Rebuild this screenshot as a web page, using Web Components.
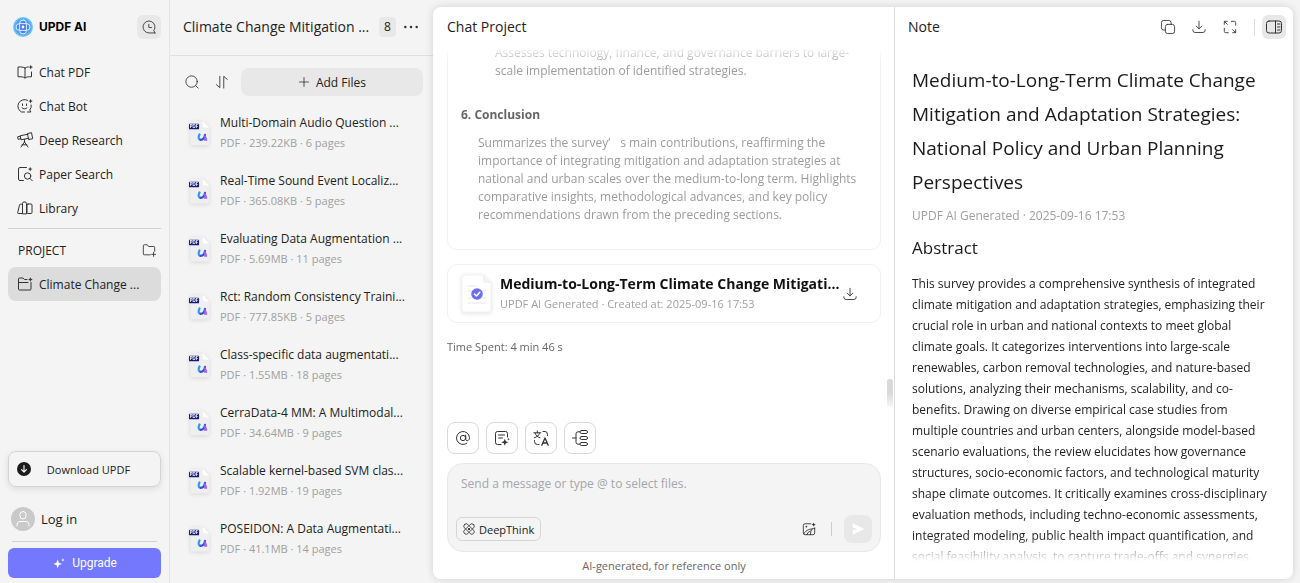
<!DOCTYPE html>
<html lang="en">
<head>
<meta charset="utf-8">
<title>UPDF AI</title>
<style>
  * { box-sizing: border-box; }
  body {
    margin: 0;
    height: 100vh;
    overflow: hidden;
    background: #f4f4f4;
    color: #222;
    font-family: "Open Sans", "Noto Sans", "Noto Sans CJK SC", sans-serif;
    font-size: 12px;
  }
</style>
</head>
<body>
<updf-app></updf-app>

<script>
// Shared reset, every shadow root needs its own copy
const base = `
  * { box-sizing: border-box; }
  h1, h2, h3, p, ul { margin: 0; padding: 0; font-weight: 400; }
  button { font: inherit; color: inherit; margin: 0; padding: 0; border: 0; background: none; cursor: pointer; }
  a { color: inherit; text-decoration: none; }
`;

const icons = {
  logo: `<defs><radialGradient id="g"><stop offset="0" stop-color="#3f6ff5"/><stop offset=".6" stop-color="#4a8cf8"/><stop offset="1" stop-color="#6fd0fb"/></radialGradient></defs>
    <circle cx="10" cy="10" r="10" fill="url(#g)" stroke="none"/>
    <g stroke="#dff0ff" stroke-width="1"><rect x="3" y="6.6" width="14" height="6.8" rx="3.4"/><rect x="6.6" y="3" width="6.8" height="14" rx="3.4"/></g>
    <circle cx="10" cy="10" r="1.4" fill="#fff" stroke="none"/>`,
  history: `<path d="M14.800 14.800H8A6.800 6.800 0 1 1 13.500 12l1.300 2.800z"/><path d="M7.800 5v3.600h3"/>`,
  book: `<path d="M8 4C6.5 3 4 2.8 1 3v9.8c3-.2 5.500 0 7 1.200 1.500-1.200 3.800-1.400 6.500-1.200V8M8 4v10M8 4c.9-.7 2-1 3.300-1"/><path class="f" d="M13.800.8l.7 1.600 1.600.7-1.600.7-.7 1.600-.7-1.600-1.600-.7 1.600-.7z"/>`,
  bot: `<path d="M10.500 2.300A6 6 0 1 0 4.500 14h3M14.200 7a6 6 0 0 1-1.500 5l1.200 2h-3.500"/><path d="M5.500 6v1.500M9.500 6v1.500M5 9.800c1.400 1.500 3.700 1.500 5 0"/><path class="f" d="M13.600.8l.7 1.600 1.600.7-1.600.7-.7 1.600-.7-1.600-1.600-.7 1.600-.7z"/>`,
  telescope: `<path d="M10.800 1.500l3.700-.8 1.200 6-3.700.8zM10.900 2.200L3.200 3.800l.8 4 7.800-1.500M3.300 4.200L.6 4.800l.5 2.500 2.700-.5M7.500 10L4 15M7.500 10l3.500 5M7.500 7.500V10M5 12.800h4.800"/>`,
  paper: `<path d="M9.500 1.500H3A1.500 1.500 0 0 0 1.500 3v10A1.500 1.500 0 0 0 3 14.500h3.500"/><circle cx="10.600" cy="10" r="3.200"/><path d="M13 12.500l2.300 2.300"/><path class="f" d="M13.200.8l.7 1.600 1.600.7-1.600.7-.7 1.600-.7-1.600-1.600-.7 1.600-.7z"/>`,
  library: `<path d="M5 13.500H1.200q-.7 0-.5-.8L2.500 5q.2-.8 1-.8H5M5.500 13.500v-10q0-1.500 1.500-1.500h1q1.500 0 1.500 1.500v10zM11 4h3q1 0 1 1v7.500q0 1-1 1h-3q-1 0-1-1V5q0-1 1-1z"/>`,
  folderPlus: `<path d="M9.500 13.500H2.500a1 1 0 0 1-1-1V3a1 1 0 0 1 1-1H6l1.500 2h6a1 1 0 0 1 1 1v4.500M11 13h4.500M13.200 10.700v4.600"/>`,
  folder: `<path d="M10 3.500H7.500L6 2H2.500a1 1 0 0 0-1 1v10a1 1 0 0 0 1 1h10.500a1 1 0 0 0 1-1V6.500M1.500 6.500H11"/><path class="f" d="M13.400 1.200l.7 1.600 1.600.7-1.600.7-.7 1.600-.7-1.600-1.600-.7 1.600-.7z"/>`,
  downDot: `<circle cx="8" cy="8" r="8" fill="#1c1c1c" stroke="none"/><path stroke="#fff" stroke-width="1.300" d="M8 4.200v7.200M5.200 8.700L8 11.500l2.800-2.800"/>`,
  user: `<circle cx="12" cy="12" r="12" fill="#c9c9c9" stroke="none"/><g stroke="#fff"><rect x="9" y="4.500" width="6" height="7.500" rx="3"/><path d="M6 19v-1.500q0-3 3-3h6q3 0 3 3V19"/></g>`,
  sparkle: `<path fill="#fff" stroke="none" d="M6.500 4l1.400 3.600L11.500 9l-3.600 1.400L6.500 14l-1.400-3.600L1.500 9l3.600-1.400zM12.500 2.500l.6 1.400 1.400.6-1.400.6-.6 1.400-.6-1.400-1.400-.6 1.400-.6z"/>`,
  dots: `<g class="f"><circle cx="1.500" cy="8" r="1.400"/><circle cx="8" cy="8" r="1.400"/><circle cx="14.500" cy="8" r="1.400"/></g>`,
  search: `<circle cx="7.500" cy="7.500" r="6.500"/><path d="M12.300 12.300l2.700 2.700"/>`,
  sort: `<path d="M5.500 1.500V14.500L1.500 11M10 15V1.500l4 3.500"/>`,
  plus: `<path d="M8 2v12M2 8h12"/>`,
  pdf: `<path fill="#efeff1" stroke="none" d="M3.500 1H15l7 7v17.500q0 2-2 2H3.500q-2 0-2-2V3q0-2 2-2z"/>
    <path fill="#fff" stroke="none" d="M15 1l7 7h-5q-2 0-2-2z"/>
    <rect x="0" y="4" width="11" height="6" rx="1" fill="#141c78" stroke="none"/>
    <text x="5.500" y="8.800" text-anchor="middle" font-family="Inter, sans-serif" font-size="4.800" font-weight="700" fill="#fff" stroke="none">PDF</text>
    <path stroke="#2d9be8" stroke-width="2.400" d="M11.500 15.500c-1.600 3-1.300 6 1.200 6"/><path stroke="#3f4bdf" stroke-width="2.400" d="M12.700 21.500c2.800 0 4.300-2.600 4.800-5.400"/><path fill="#9a6ae8" stroke="none" d="M16.800 16.200q2.800 1.200 3.200 6.300h-3.600z"/>`,
  doc: `<path fill="#fff" stroke="#f3f3f3" d="M4 1h18l8 8v26q0 3-3 3H4q-3 0-3-3V4q0-3 3-3z"/><path fill="#f2f2f2" stroke="none" d="M22 1l8 8h-6q-2 0-2-2z"/>
    <path stroke="#e6e7ef" stroke-width="1.200" d="M7 12h8M7 17h18M7 24h18M7 29h18"/><circle cx="16" cy="20" r="5.800" fill="#6c70f0" stroke="none"/><path stroke="#fff" stroke-width="1.500" d="M13.500 20l2 2 3.300-3.700"/>`,
  download: `<path d="M8 1.500V10M4.800 7L8 10.200 11.200 7M1 11v.8q0 2.500 2.500 2.500h9q2.500 0 2.500-2.500V11"/>`,
  copy: `<rect x="5" y="5" width="10.500" height="10.500" rx="2.500"/><path d="M11.500 5V3q0-2.500-2.500-2.500H3Q.5.500.5 3v6q0 2.500 2.500 2.500h2"/>`,
  expand: `<path d="M1.500 5V1.500H5M1.500 1.500L5 5M9.500 1.500H13q1.500 0 1.500 1.500v3M14.500 11v3.500H11M14.500 14.500L11 11M1.500 9.500V13q0 1.500 1.500 1.500h3"/>`,
  panel: `<rect x=".5" y="2" width="15" height="12" rx="2.500"/><path d="M9.500 2v12M11.500 5H14M11.500 8H14M11.500 11H14"/>`,
  at: `<circle cx="8" cy="8" r="2.700"/><path d="M10.700 5.200V9.200c0 2.300 3.800 2 3.800-1.400A6.500 6.500 0 1 0 11.800 13.300"/>`,
  summary: `<path d="M7 14.500H3.500q-2 0-2-2v-9q0-2 2-2h8q2 0 2 2V7M4.500 5h6M4.500 8h4"/><path class="f" d="M10.800 8.800l1 2.500 2.500 1-2.500 1-1 2.500-1-2.500-2.500-1 2.500-1zM14.500 7.800l.4 1 1 .4-1 .4-.4 1-.4-1-1-.4 1-.4z"/>`,
  translate: `<path d="M.8 2.800h7M4.300.8v2M2 3c.7 2.400 2.400 4 5 4.800M6.600 3c-.7 2.400-2.400 4-5.400 4.800M10 1.500H12q2.500 0 2.500 3v1M1.500 10.500v1q0 3 3 3H6"/><path stroke-width="1.300" d="M8.800 15.200L12 8l3.200 7.200M9.900 13h4.200"/>`,
  mindmap: `<path d="M.5 8H4M7.500 1.800H6q-2 0-2 2v8.400q0 2 2 2h1.500"/><rect x="8" y=".5" width="7.500" height="3" rx="1.500"/><rect x="8" y="6.500" width="7.500" height="3" rx="1.500"/><rect x="8" y="12.500" width="7.500" height="3" rx="1.500"/>`,
  atom: `<rect x="-3.200" y="-8.500" width="6.400" height="17" rx="3.200" transform="translate(8 8) rotate(45)"/><rect x="-3.200" y="-8.500" width="6.400" height="17" rx="3.200" transform="translate(8 8) rotate(-45)"/><circle class="f" cx="8" cy="8" r="1.500"/>`,
  image: `<path d="M10 2H3.500q-2 0-2 2v8.500q0 2 2 2h9q2 0 2-2V6.500M2 13.500c3-5 7-5.500 12.500-6M5.500 14.500q.5-3 4-4.200M9.500 14.500q0-4 2-6.500"/><circle class="f" cx="5" cy="5.200" r="1"/><path class="f" d="M13.300.5l.8 1.700 1.700.8-1.700.8-.8 1.700-.8-1.700-1.700-.8 1.700-.8z"/>`,
  send: `<path fill="#fff" stroke="none" d="M2 1.500l13 6.500-13 6.500V9.500L8 8 2 6.500z"/>`
};

class UiIcon extends HTMLElement {
  constructor() {
    super();
    this.attachShadow({ mode: "open" });
  }

  connectedCallback() {
    const box = this.getAttribute("box") || "16 16";
    this.shadowRoot.innerHTML = `
      <style>
        :host { display: block; flex: none; width: 16px; height: 16px; }
        svg { display: block; width: 100%; height: 100%; overflow: visible; fill: none; stroke: currentColor;
              stroke-width: 1; stroke-linecap: round; stroke-linejoin: round; }
        .f { fill: currentColor; stroke: none; }
      </style>
      <svg viewBox="0 0 ${box}" aria-hidden="true">${icons[this.getAttribute("name")]}</svg>
    `;
  }
}
customElements.define("ui-icon", UiIcon);

class IconButton extends HTMLElement {
  constructor() {
    super();
    this.attachShadow({ mode: "open" });
  }

  connectedCallback() {
    this.shadowRoot.innerHTML = `
      <style>
        ${base}
        :host { display: block; flex: none; }
        button { display: grid; place-items: center; width: 24px; height: 24px; border-radius: 6px; color: #333; }
        :host([filled]) button { background: #e8e8e8; }
        :host([outlined]) button { width: 32px; height: 32px; border: 1px solid #d9d9d9; border-radius: 8px; background: #fff; }
        :host([send]) button { width: 28px; height: 28px; border-radius: 8px; background: #e8e8e8; }
        ui-icon { width: 14px; height: 14px; }
        :host([outlined]) ui-icon, :host([large]) ui-icon { width: 16px; height: 16px; }
      </style>
      <button type="button" aria-label="${this.getAttribute("label")}"><ui-icon name="${this.getAttribute("icon")}"></ui-icon></button>
    `;
  }
}
customElements.define("icon-button", IconButton);

class NavItem extends HTMLElement {
  constructor() {
    super();
    this.attachShadow({ mode: "open" });
  }

  connectedCallback() {
    this.shadowRoot.innerHTML = `
      <style>
        ${base}
        :host { display: block; }
        a { display: flex; align-items: center; gap: 6px; height: 34px; padding: 0 9px; border-radius: 8px; font-size: 12px; white-space: nowrap; }
        :host([active]) a { background: #dcdcdc; }
        ui-icon { color: #333; }
      </style>
      <a href="#"><ui-icon name="${this.getAttribute("icon")}"></ui-icon><slot></slot></a>
    `;
  }
}
customElements.define("nav-item", NavItem);

class AppSidebar extends HTMLElement {
  constructor() {
    super();
    this.attachShadow({ mode: "open" });
    this.shadowRoot.innerHTML = `
      <style>
        ${base}
        :host { display: flex; flex-direction: column; padding: 15px 8px 5px; border-right: 1px solid #e4e4e4; }
        .brand { display: flex; align-items: center; gap: 6px; padding-left: 5px; margin-bottom: 16px; }
        .brand ui-icon { width: 20px; height: 20px; }
        .brand b { flex: 1; font: 700 12px/24px Inter, sans-serif; color: #000; }
        hr { width: 100%; margin: 0; border: 0; border-top: 1px solid #d2d2d2; }
        nav hr { margin: 3px 0 4px; }
        .project { display: flex; align-items: center; justify-content: space-between; height: 34px; padding: 0 0 0 10px; }
        .project h2 { font-size: 12px; }
        .spacer { flex: 1; }
        .download { display: flex; align-items: center; height: 36px; padding: 0 14px 0 8px; border: 1px solid #d4d4d8; border-radius: 8px;
                    font-size: 11px; box-shadow: 0 2px 6px rgba(0, 0, 0, .1); }
        .download ui-icon { width: 14px; height: 14px; }
        .download span { flex: 1; text-align: center; }
        .login { display: flex; align-items: center; gap: 6px; height: 24px; margin: 20px 3px 10px; font-size: 13px; }
        .login ui-icon { width: 24px; height: 24px; }
        .line { margin: 0 4px 6px; width: auto; }
        .upgrade { display: flex; align-items: center; justify-content: center; gap: 6px; height: 30px; border-radius: 6px;
                   background: #7378fd; color: #fff; font: 12px Roboto, sans-serif; }
        .upgrade ui-icon { width: 14px; height: 14px; }
      </style>
      <div class="brand">
        <ui-icon name="logo" box="20 20"></ui-icon><b>UPDF AI</b>
        <icon-button icon="history" label="History" filled></icon-button>
      </div>
      <nav>
        <nav-item icon="book">Chat PDF</nav-item>
        <nav-item icon="bot">Chat Bot</nav-item>
        <nav-item icon="telescope">Deep Research</nav-item>
        <nav-item icon="paper">Paper Search</nav-item>
        <nav-item icon="library">Library</nav-item>
        <hr>
        <div class="project"><h2>PROJECT</h2><icon-button icon="folderPlus" label="New project"></icon-button></div>
        <nav-item icon="folder" active>Climate Change ...</nav-item>
      </nav>
      <div class="spacer"></div>
      <button class="download" type="button"><ui-icon name="downDot"></ui-icon><span>Download UPDF</span></button>
      <a class="login" href="#"><ui-icon name="user" box="24 24"></ui-icon>Log in</a>
      <hr class="line">
      <button class="upgrade" type="button"><ui-icon name="sparkle"></ui-icon>Upgrade</button>
    `;
  }
}
customElements.define("app-sidebar", AppSidebar);

class FileItem extends HTMLElement {
  constructor() {
    super();
    this.attachShadow({ mode: "open" });
  }

  connectedCallback() {
    this.shadowRoot.innerHTML = `
      <style>
        ${base}
        :host { display: flex; gap: 9px; height: 58px; white-space: nowrap; }
        ui-icon { width: 22px; height: 26px; margin-top: 7px; filter: drop-shadow(0 1px 2px rgba(0, 0, 0, .12)); }
        h3 { font-size: 12px; line-height: 20px; }
        p { font-size: 11px; line-height: 20px; color: #a0a0a0; }
      </style>
      <ui-icon name="pdf" box="24 28"></ui-icon>
      <div><h3><slot></slot></h3><p>PDF · ${this.getAttribute("meta")}</p></div>
    `;
  }
}
customElements.define("file-item", FileItem);

const files = [
  ["Multi-Domain Audio Question ...", "239.22KB · 6 pages"],
  ["Real-Time Sound Event Localiz...", "365.08KB · 5 pages"],
  ["Evaluating Data Augmentation ...", "5.69MB · 11 pages"],
  ["Rct: Random Consistency Traini...", "777.85KB · 5 pages"],
  ["Class-specific data augmentati...", "1.55MB · 18 pages"],
  ["CerraData-4 MM: A Multimodal...", "34.64MB · 9 pages"],
  ["Scalable kernel-based SVM clas...", "1.92MB · 19 pages"],
  ["POSEIDON: A Data Augmentati...", "41.1MB · 14 pages"]
];

class FilePanel extends HTMLElement {
  constructor() {
    super();
    this.attachShadow({ mode: "open" });
    this.shadowRoot.innerHTML = `
      <style>
        ${base}
        :host { display: block; min-width: 0; overflow: hidden; }
        header { display: flex; align-items: center; height: 56px; padding: 0 10px 2px 13px; border-bottom: 1px solid #e0e0e0; }
        h1 { flex: 1; font-size: 14px; white-space: nowrap; }
        .count { width: 17px; margin-right: 3px; border-radius: 4px; background: #e8e8e8; font-size: 12px; line-height: 20px; text-align: center; }
        .tools { display: flex; align-items: center; gap: 6px; padding: 12px 10px 17px; }
        .add { flex: 1; display: flex; align-items: center; justify-content: center; gap: 6px; height: 28px; margin-left: 1px;
               border-radius: 8px; background: #e8e8e8; }
        .add ui-icon { width: 12px; height: 12px; }
        .list { padding-left: 19px; }
      </style>
      <header>
        <h1>Climate Change Mitigation ...</h1>
        <span class="count">8</span>
        <icon-button icon="dots" label="More"></icon-button>
      </header>
      <div class="tools">
        <icon-button icon="search" label="Search"></icon-button>
        <icon-button icon="sort" label="Sort"></icon-button>
        <button class="add" type="button"><ui-icon name="plus"></ui-icon>Add Files</button>
      </div>
      <div class="list">
        ${files.map(([title, meta]) => `<file-item meta="${meta}">${title}</file-item>`).join("")}
      </div>
    `;
  }
}
customElements.define("file-panel", FilePanel);

class MessageComposer extends HTMLElement {
  constructor() {
    super();
    this.attachShadow({ mode: "open" });
    this.shadowRoot.innerHTML = `
      <style>
        ${base}
        :host { display: block; }
        .shortcuts { display: flex; gap: 7px; margin-bottom: 9px; }
        .box { display: flex; flex-direction: column; height: 89px; padding: 10px 8px 8px; border: 1px solid #e8e8e8; border-radius: 16px; background: #f4f4f4; }
        textarea { flex: 1; padding: 0 5px; border: 0; outline: 0; background: none; resize: none; overflow: hidden; font: inherit; font-size: 12px; line-height: 20px; color: #222; }
        textarea::placeholder { color: #a3a6ad; opacity: 1; }
        .row { display: flex; align-items: center; }
        .think { display: flex; align-items: center; gap: 4px; height: 24px; padding: 0 6px; border: 1px solid #d6d6d6; border-radius: 6px; font-size: 11px; margin-right: auto; }
        .think ui-icon { width: 12px; height: 12px; }
        i { width: 1px; height: 14px; margin: 0 12px 0 10px; background: #ccc; }
      </style>
      <div class="shortcuts">
        <icon-button outlined icon="at" label="Mention a file"></icon-button>
        <icon-button outlined icon="summary" label="Summarize"></icon-button>
        <icon-button outlined icon="translate" label="Translate"></icon-button>
        <icon-button outlined icon="mindmap" label="Mind map"></icon-button>
      </div>
      <div class="box">
        <textarea aria-label="Message" placeholder="Send a message or type @ to select files."></textarea>
        <div class="row">
          <button class="think" type="button"><ui-icon name="atom"></ui-icon>DeepThink</button>
          <icon-button icon="image" label="Add image"></icon-button>
          <i></i>
          <icon-button send icon="send" label="Send"></icon-button>
        </div>
      </div>
    `;
  }
}
customElements.define("message-composer", MessageComposer);

class ChatPanel extends HTMLElement {
  constructor() {
    super();
    this.attachShadow({ mode: "open" });
    this.shadowRoot.innerHTML = `
      <style>
        ${base}
        :host { display: flex; flex-direction: column; min-width: 0; position: relative; padding: 0 13px 0 14px; border-right: 1px solid #ddd; }
        h1 { font-size: 14px; line-height: 40px; }
        .scroll { flex: 1; min-height: 0; display: flex; flex-direction: column; justify-content: flex-end; overflow: hidden;
                  -webkit-mask: linear-gradient(transparent, #000 16px); mask: linear-gradient(transparent, #000 16px); }
        .card { flex: none; border: 1px solid #f0f0f0; border-radius: 10px; padding: 0 13px; }
        .answer { padding-bottom: 25px; color: #9c9c9c; font-size: 12px; line-height: 18px; }
        .answer h3 { margin: 26px 0 10px; font-size: 12px; font-weight: 700; color: #666; }
        .answer .sub { padding-left: 34px; }
        .answer .sec { padding-left: 17px; }
        .quote { display: inline-block; width: 12px; }
        .file { display: flex; align-items: center; gap: 8px; height: 59px; margin: 14px 0; padding-right: 18px; }
        .file ui-icon { width: 31px; height: 39px; filter: drop-shadow(0 1px 2px rgba(0, 0, 0, .12)); }
        .file div { flex: 1; min-width: 0; white-space: nowrap; }
        .file h2 { font-size: 14px; line-height: 20px; font-weight: 700; color: #111; }
        .file p { font-size: 11px; line-height: 20px; color: #a0a0a0; }
        .spent { margin-bottom: 65px; font-size: 11px; line-height: 20px; color: #666; }
        .thumb { position: absolute; right: 1px; top: 372px; width: 6px; height: 28px; border-radius: 3px 3px 0 0; background: linear-gradient(#d9d9db 50%, #f8f8f8); }
        footer { padding: 4px 0 3px; font-size: 11px; line-height: 20px; text-align: center; color: #666; }
      </style>
      <h1>Chat Project</h1>
      <div class="scroll">
        <section class="card answer">
          <p class="sub">Assesses technology, finance, and governance barriers to large-scale implementation of identified strategies.</p>
          <h3>6. Conclusion</h3>
          <p class="sec">Summarizes the survey<span class="quote">’</span>s main contributions, reaffirming the importance of integrating mitigation and adaptation strategies at national and urban scales over the medium-to-long term. Highlights comparative insights, methodological advances, and key policy recommendations drawn from the preceding sections.</p>
        </section>
        <section class="card file">
          <ui-icon name="doc" box="31 39"></ui-icon>
          <div><h2>Medium-to-Long-Term Climate Change Mitigati...</h2><p>UPDF AI Generated · Created at: 2025-09-16 17:53</p></div>
          <icon-button icon="download" label="Download note"></icon-button>
        </section>
        <p class="spent">Time Spent: 4 min 46 s</p>
      </div>
      <div class="thumb"></div>
      <message-composer></message-composer>
      <footer>AI-generated, for reference only</footer>
    `;
  }
}
customElements.define("chat-panel", ChatPanel);

class NotePanel extends HTMLElement {
  constructor() {
    super();
    this.attachShadow({ mode: "open" });
    this.shadowRoot.innerHTML = `
      <style>
        ${base}
        :host { display: flex; flex-direction: column; min-width: 0; padding-bottom: 18px; }
        header { display: flex; align-items: center; gap: 7px; height: 40px; padding: 0 7px 0 13px; }
        header h2 { flex: 1; font-size: 14px; line-height: 40px; }
        header i { width: 1px; height: 17px; margin-left: 5px; background: #ddd; }
        article { flex: 1; min-height: 0; overflow: hidden; padding: 16px 22px 0 17px;
                  -webkit-mask: linear-gradient(#000 calc(100% - 24px), transparent); mask: linear-gradient(#000 calc(100% - 24px), transparent); }
        h1 { font-size: 19px; line-height: 34px; color: #1a1a1a; }
        .meta { margin: 7px 0 10px; font-size: 12px; line-height: 20px; color: #a0a0a0; }
        h3 { margin-bottom: 13px; font-size: 17px; line-height: 24px; color: #1a1a1a; }
        .text { font-size: 12px; line-height: 21px; }
      </style>
      <header>
        <h2>Note</h2>
        <icon-button icon="copy" label="Copy"></icon-button>
        <icon-button icon="download" label="Download"></icon-button>
        <icon-button icon="expand" label="Expand"></icon-button>
        <i></i>
        <icon-button icon="panel" label="Toggle note" filled large></icon-button>
      </header>
      <article>
        <h1>Medium-to-Long-Term Climate Change Mitigation and Adaptation Strategies: National Policy and Urban Planning Perspectives</h1>
        <p class="meta">UPDF AI Generated · 2025-09-16 17:53</p>
        <h3>Abstract</h3>
        <p class="text">This survey provides a comprehensive synthesis of integrated climate mitigation and adaptation strategies, emphasizing their crucial role in urban and national contexts to meet global climate goals. It categorizes interventions into large-scale renewables, carbon removal technologies, and nature-based solutions, analyzing their mechanisms, scalability, and co-benefits. Drawing on diverse empirical case studies from multiple countries and urban centers, alongside model-based scenario evaluations, the review elucidates how governance structures, socio-economic factors, and technological maturity shape climate outcomes. It critically examines cross-disciplinary evaluation methods, including techno-economic assessments, integrated modeling, public health impact quantification, and social feasibility analysis, to capture trade-offs and synergies.</p>
      </article>
    `;
  }
}
customElements.define("note-panel", NotePanel);

class UpdfApp extends HTMLElement {
  constructor() {
    super();
    this.attachShadow({ mode: "open" });
    this.shadowRoot.innerHTML = `
      <style>
        ${base}
        :host { display: grid; grid-template-columns: 170px 263px 1fr; height: 100vh; }
        main { display: grid; grid-template-columns: 462fr 398fr; min-width: 0; min-height: 0; margin: 7px 7px 4px 0; border-radius: 8px;
               background: #fff; box-shadow: 0 0 8px rgba(0, 0, 0, .14); }
        main > * { min-height: 0; }
      </style>
      <app-sidebar></app-sidebar>
      <file-panel></file-panel>
      <main>
        <chat-panel></chat-panel>
        <note-panel></note-panel>
      </main>
    `;
  }
}
customElements.define("updf-app", UpdfApp);
</script>
</body>
</html>
